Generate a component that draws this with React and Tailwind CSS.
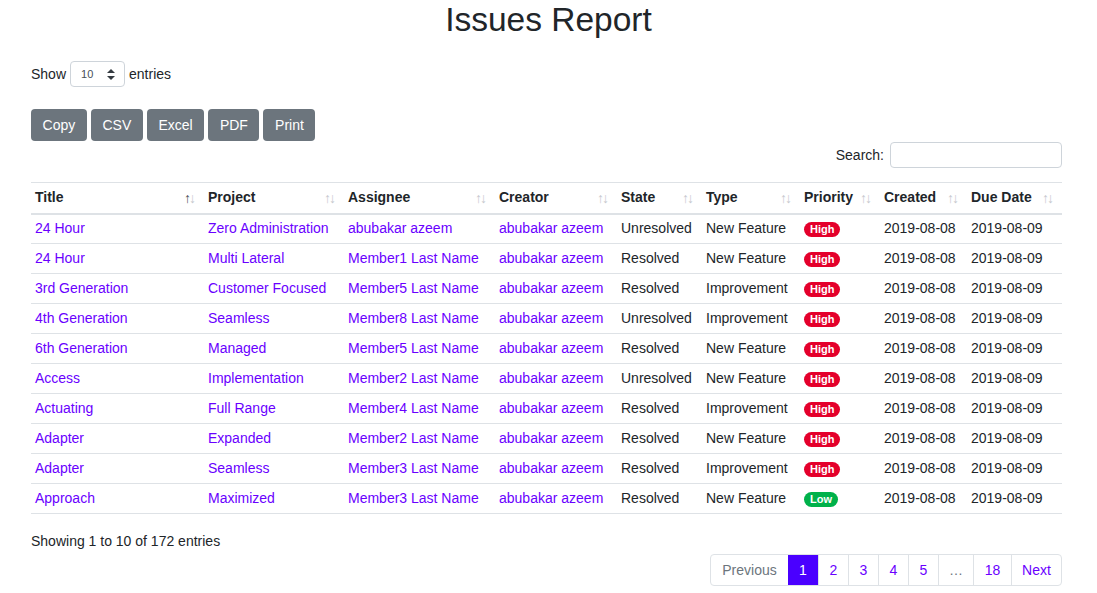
import React from "react";

const rows = [
  ["24 Hour", "Zero Administration", "abubakar azeem", "abubakar azeem", "Unresolved", "New Feature", "High"],
  ["24 Hour", "Multi Lateral", "Member1 Last Name", "abubakar azeem", "Resolved", "New Feature", "High"],
  ["3rd Generation", "Customer Focused", "Member5 Last Name", "abubakar azeem", "Resolved", "Improvement", "High"],
  ["4th Generation", "Seamless", "Member8 Last Name", "abubakar azeem", "Unresolved", "Improvement", "High"],
  ["6th Generation", "Managed", "Member5 Last Name", "abubakar azeem", "Resolved", "New Feature", "High"],
  ["Access", "Implementation", "Member2 Last Name", "abubakar azeem", "Unresolved", "New Feature", "High"],
  ["Actuating", "Full Range", "Member4 Last Name", "abubakar azeem", "Resolved", "Improvement", "High"],
  ["Adapter", "Expanded", "Member2 Last Name", "abubakar azeem", "Resolved", "New Feature", "High"],
  ["Adapter", "Seamless", "Member3 Last Name", "abubakar azeem", "Resolved", "Improvement", "High"],
  ["Approach", "Maximized", "Member3 Last Name", "abubakar azeem", "Resolved", "New Feature", "Low"],
];

const headers = [
  ["Title", "w-[173px]"],
  ["Project", "w-[140px]"],
  ["Assignee", "w-[151px]"],
  ["Creator", "w-[122px]"],
  ["State", "w-[85px]"],
  ["Type", "w-[98px]"],
  ["Priority", "w-[80px]"],
  ["Created", "w-[87px]"],
  ["Due Date", "w-[95px]"],
];

function SortIcon({ active }) {
  return (
    <span className="text-[14px] leading-none tracking-[-2px] text-[#c6c9ce] font-normal">
      <span className={active ? "text-[#4a4f55]" : ""}>↑</span>
      <span>↓</span>
    </span>
  );
}

export default function App() {
  return (
    <div
      className="w-[1097px] h-[593px] bg-white text-[#212529] text-[14px] overflow-hidden"
      style={{ fontFamily: '"Liberation Sans", Arial, sans-serif' }}
    >
      <h1 className="text-center text-[33.5px] leading-[40px] font-normal text-[#212529] pt-0">Issues Report</h1>
      <div className="pl-[31px] pr-[35px]">
        <div className="flex items-center mt-[21px] h-[26px]">
          <span>Show</span>
          <div className="ml-[4px] mr-[4px] w-[55px] h-[26px] border border-[#ced4da] rounded-[4px] flex items-center justify-between pl-[10px] pr-[9px]">
            <span className="text-[11px] text-[#495057]">10</span>
            <svg width="8" height="11" viewBox="0 0 8 11">
              <path d="M4 0 L8 4 L0 4 Z" fill="#343a40" />
              <path d="M0 7 L8 7 L4 11 Z" fill="#343a40" />
            </svg>
          </div>
          <span>entries</span>
        </div>
        <div className="flex gap-[4px] mt-[22px]">
          {["Copy", "CSV", "Excel", "PDF", "Print"].map((b) => (
            <button
              key={b}
              className="h-[32px] px-[11.6px] bg-[#6c757d] text-white text-[14px] rounded-[4px]"
            >
              {b}
            </button>
          ))}
        </div>
        <div className="flex justify-end items-center mt-px h-[26px]">
          <span className="mr-[6px]">Search:</span>
          <div className="w-[172px] h-[26px] border border-[#ced4da] rounded-[4px]" />
        </div>
        <table className="table-fixed w-[1031px] mt-[14px] border-collapse">
          <thead>
            <tr className="border-t border-[#dee2e6] border-b-2 border-b-[#dee2e6] h-[31px]">
              {headers.map(([h, w], i) => (
                <th key={h} className={`${w} text-left font-bold px-[4px] py-0`}>
                  <div className="flex items-center justify-between pr-[6px]">
                    <span>{h}</span>
                    <SortIcon active={i === 0} />
                  </div>
                </th>
              ))}
            </tr>
          </thead>
          <tbody>
            {rows.map((r, idx) => (
              <tr key={idx} className="border-b border-[#dee2e6] h-[30px]">
                {r.slice(0, 4).map((c, j) => (
                  <td key={j} className="px-[4px] text-[#6a00ff] whitespace-nowrap">{c}</td>
                ))}
                <td className="px-[4px] whitespace-nowrap">{r[4]}</td>
                <td className="px-[4px] whitespace-nowrap">{r[5]}</td>
                <td className="px-[4px]">
                  <span
                    className={`inline-flex items-center h-[15px] px-[6px] rounded-full text-white text-[11px] font-bold leading-none ${
                      r[6] === "High" ? "bg-[#e4002b]" : "bg-[#00b14a]"
                    }`}
                  >
                    {r[6]}
                  </span>
                </td>
                <td className="px-[4px] whitespace-nowrap">2019-08-08</td>
                <td className="px-[4px] whitespace-nowrap">2019-08-09</td>
              </tr>
            ))}
          </tbody>
        </table>
        <div className="mt-[17px] leading-[20px]">Showing 1 to 10 of 172 entries</div>
        <div className="flex justify-end mt-[3px]">
          <div className="flex h-[32px] border border-[#dee2e6] rounded-[4px] overflow-hidden">
            <span className="flex items-center justify-center w-[77px] text-[#6c757d]">Previous</span>
            <span className="flex items-center justify-center w-[30px] bg-[#4a00ff] text-white">1</span>
            {["2", "3", "4", "5"].map((p) => (
              <span key={p} className="flex items-center justify-center w-[30px] border-l border-[#dee2e6] text-[#6a00ff]">{p}</span>
            ))}
            <span className="flex items-center justify-center w-[35px] border-l border-[#dee2e6] text-[#6c757d]">…</span>
            <span className="flex items-center justify-center w-[38px] border-l border-[#dee2e6] text-[#6a00ff]">18</span>
            <span className="flex items-center justify-center w-[50px] border-l border-[#dee2e6] text-[#6a00ff]">Next</span>
          </div>
        </div>
      </div>
    </div>
  );
}
